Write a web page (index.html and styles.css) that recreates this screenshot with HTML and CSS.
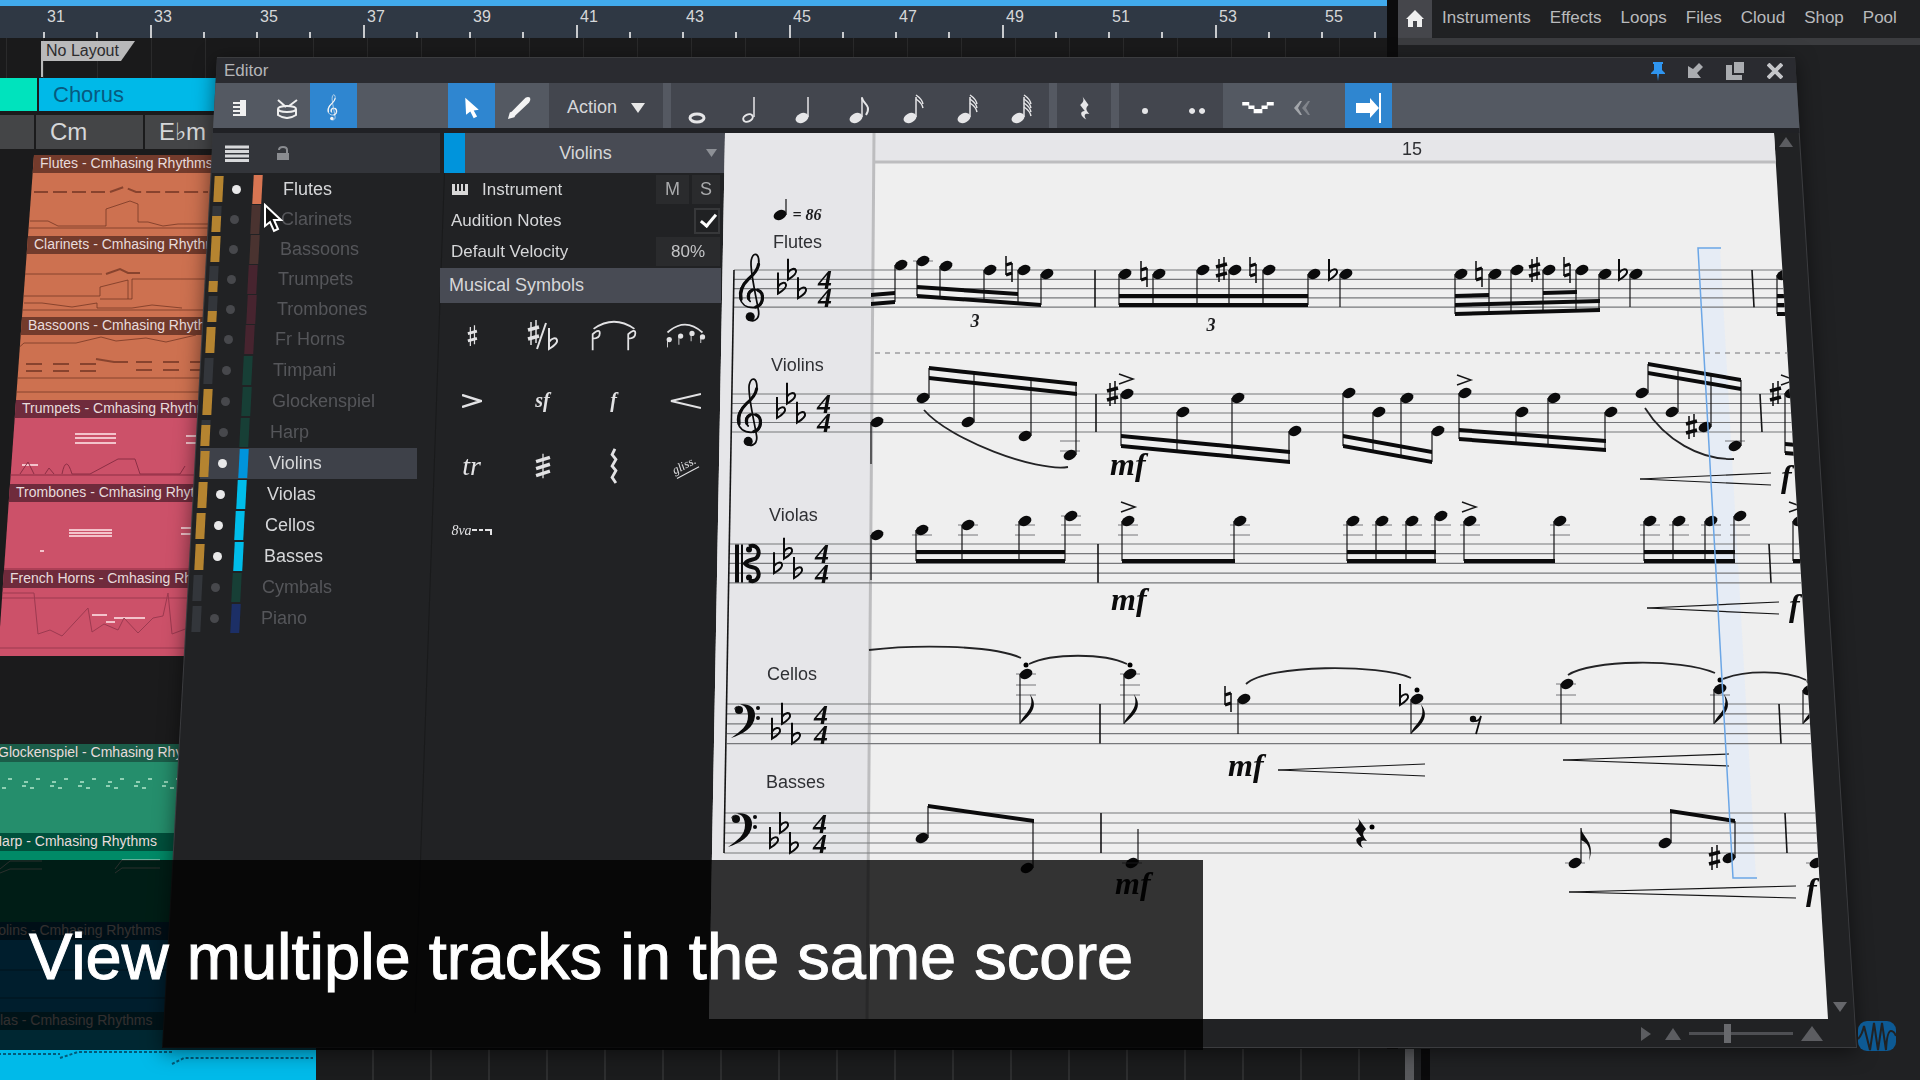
FILE: index.html
```html
<!DOCTYPE html>
<html lang="en">
<head>
    <meta charset="UTF-8">
    <meta name="viewport" content="width=device-width, initial-scale=1.0">
    <title>Score Editor</title>
    <link rel="stylesheet" href="styles.css">
</head>
<body>
    <!-- shared music symbols -->
    <svg class="defs" width="0" height="0" aria-hidden="true">
        <defs>
            <g id="treble">
                <g fill="none" stroke="currentColor" stroke-linecap="round">
                    <path stroke-width="5" d="M-8 10 C-22 -2 -14 -25 6 -24 C36 -21 38 28 0 28 C-42 28 -52 -20 -15 -52 C12 -76 20 -92 16 -112 C13 -128 0 -130 -5 -108 C-10 -84 5 -24 16 38 C20 66 -4 70 -14 60"/>
                    <path stroke-width="9" d="M14 -22 C34 -14 30 20 8 26 M-34 4 C-38 -18 -30 -38 -13 -54 C4 -68 14 -82 16 -96 M-12 2 C-15 -10 -10 -18 -2 -22"/>
                </g>
                <circle cx="-8" cy="54" r="13" fill="currentColor"/>
            </g>
            <g id="bass" fill="currentColor">
                <circle cx="7" cy="-4" r="4"/>
                <path d="M2 -4 C3 -12 24 -13 23 2 C22 14 11 20 -1 24 C9 17 16 12 16 2 C16 -8 9 -11 5 -8z"/>
                <circle cx="26" cy="-6" r="2"/><circle cx="26" cy="4" r="2"/>
            </g>
            <g id="alto" fill="currentColor">
                <path d="M0 -19h4v38h-4z M6 -19h2v38h-2z"/>
                <circle cx="14" cy="-14" r="3"/><circle cx="14" cy="14" r="3"/>
                <path fill="none" stroke="currentColor" stroke-width="4" d="M14 -17 C22 -20 26 -12 22 -6 C20 -3 14 -5 10 0 C14 5 20 3 22 6 C26 12 22 20 14 17"/>
            </g>
            <g id="flat" fill="none" stroke="currentColor" stroke-width="2">
                <path d="M0 -16V5C5 2 9 -1 8 -4C7 -7 3 -6 0 -2"/>
            </g>
            <g id="natural" fill="none" stroke="currentColor">
                <path stroke-width="1.5" d="M-3 -13V6 M3 -6V13"/><path stroke-width="3" d="M-3 -4L3 -6 M-3 6L3 4"/>
            </g>
            <g id="sharp" fill="none" stroke="currentColor">
                <path stroke-width="1.5" d="M-2 -11V12 M3 -13V10"/><path stroke-width="3.5" d="M-5 -3L6 -6 M-5 6L6 3"/>
            </g>
            <g id="head"><ellipse rx="6.7" ry="4.8" transform="rotate(-25)" fill="currentColor"/></g>
            <g id="rest4"><path fill="currentColor" d="M-2 -15L6 -4C2 0 2 2 7 8C1 6 -1 9 3 15C-5 11 -6 4 1 4L-5 -4C0 -8 0 -11 -2 -15z"/></g>
            <g id="rest8"><circle cx="-3" cy="-5" r="3.2" fill="currentColor"/><path fill="none" stroke="currentColor" stroke-width="1.8" d="M-3 -3Q3 -2 5 -8L0 10"/></g>
            <g id="flagUp"><path fill="currentColor" d="M0 0C1 9 15 14 8 33C11 19 5 14 0 12z"/></g>
            <g id="flagDown"><path fill="currentColor" d="M0 0C1 -9 18 -16 11 -33C21 -20 13 -11 0 0z"/></g>
        </defs>
    </svg>

    <main class="daw">
        <section class="arrange">
            <ol class="ruler" id="ruler"></ol>
            <div class="markers"><span class="flag">No Layout</span></div>
            <div class="sections"><span class="part verse"></span><span class="part chorus">Chorus</span></div>
            <div class="chords"><span class="first"></span><span class="chord">Cm</span><span class="chord">E♭m</span></div>
            <ul class="clips" id="clips"></ul>
        </section>
        <aside class="browser">
            <nav class="tabs">
                <a href="#home" class="home" aria-label="Home">
                    <svg width="18" height="18" viewBox="0 0 18 18"><path fill="#eee" d="M9 0L18 9H16V17H11V11H7V17H2V9H0z"/></svg>
                </a>
                <a href="#instruments">Instruments</a>
                <a href="#effects">Effects</a>
                <a href="#loops">Loops</a>
                <a href="#files">Files</a>
                <a href="#cloud">Cloud</a>
                <a href="#shop">Shop</a>
                <a href="#pool">Pool</a>
            </nav>
        </aside>
    </main>
    <div class="foot"></div>

    <div class="window">
        <section class="editor">
            <header class="titlebar">
                <h1>Editor</h1>
                <div class="winbuttons">
                    <button aria-label="Pin"><svg width="14" height="20" viewBox="0 0 14 20"><path fill="#2f95ef" d="M2 1h10v2h-1v6l3 3v1H8l-1 7-1-7H0v-1l3-3V3H2z"/></svg></button>
                    <button aria-label="Dock"><svg width="16" height="16" viewBox="0 0 16 16"><path fill="#aaacb0" d="M12 0L16 4 10 10 14 15H1V3L6 6z"/></svg></button>
                    <button aria-label="Maximize"><svg width="20" height="20" viewBox="0 0 20 20"><path fill="#aaacb0" d="M9 1h10v11H9z M1 4h6v10h10v5H1z"/></svg></button>
                    <button aria-label="Close"><svg width="16" height="16" viewBox="0 0 16 16"><path stroke="#c4c5c8" stroke-width="4" d="M1 1L15 15M15 1L1 15"/></svg></button>
                </div>
            </header>

            <div class="toolbar">
                <button class="tool" aria-label="Piano view"><svg width="14" height="16" viewBox="0 0 14 16"><path fill="#f0f0f0" d="M7 0h6v16H0v-2h7v-2H0v-2h7V8H0V6h7V4H0V2h7z"/></svg></button>
                <button class="tool" aria-label="Drum view"><svg width="24" height="22" viewBox="0 0 24 22" fill="none" stroke="#eee" stroke-width="2"><ellipse cx="12" cy="12" rx="9" ry="3"/><path d="M3 12V18Q12 24 21 18V12M3 3L11 10M22 3L14 9"/></svg></button>
                <button class="tool on" aria-label="Score view"><svg width="18" height="28" viewBox="-32 -70 100 210"><use href="#treble" transform="translate(10 60)" color="#f4f4f4"/></svg></button>
                <button class="tool arrow on" aria-label="Arrow tool"><svg width="18" height="22" viewBox="0 0 20 26"><path fill="#fff" d="M2 1L18 15L12 16L16 23L12 25L8 17L3 21z"/></svg></button>
                <button class="tool" aria-label="Paint tool"><svg width="26" height="24" viewBox="0 0 26 26"><path fill="#f4f4f4" d="M1 25L3 18L5 17L20 2Q23 0 25 2Q26 4 24 7L9 21L8 23z"/></svg></button>
                <button class="action">Action <svg width="14" height="10" viewBox="0 0 14 10"><path fill="#e8e8e8" d="M0 0H14L7 10z"/></svg></button>
                <i class="sep"></i>
                <div class="notes" id="noteTools"></div>
                <i class="sep"></i>
                <div class="notes"><button aria-label="Rest"><svg width="16" height="26" viewBox="-10 -17 20 34"><use href="#rest4"/></svg></button></div>
                <i class="sep"></i>
                <div class="notes">
                    <button aria-label="Dotted"><svg width="16" height="34" viewBox="0 0 16 34"><circle cx="8" cy="20" r="3" fill="currentColor"/></svg></button>
                    <button aria-label="Double dotted"><svg width="18" height="34" viewBox="0 0 18 34"><path fill="currentColor" d="M4 17a3 3 0 1 0 .1 0M14 17a3 3 0 1 0 .1 0"/></svg></button>
                </div>
                <button class="tuplet" aria-label="Tuplet"><svg width="38" height="14" viewBox="0 0 38 16"><path fill="#fff" d="M1 1h8v4H1z M8 5h7v4H8z M14 9h10v5H14z M23 5h7v4h-7z M29 1h8v4h-8z"/></svg></button>
                <button class="back" aria-label="Back"><svg width="18" height="14" viewBox="0 0 18 14"><path fill="#a3a6ab" d="M7 0L1 7L7 14H9L5 7L9 0z"/><path fill="#80848b" d="M15 0L9 7L15 14H17L13 7L17 0z"/></svg></button>
                <button class="tool scroll on" aria-label="Autoscroll"><svg width="28" height="32" viewBox="0 0 28 32"><path fill="#fff" d="M1 11h14V6l9 10-9 10V21H1z M24 1h2v30h-2z"/></svg></button>
            </div>

            <div class="work">
                <div class="tracks">
                    <div class="trackhead">
                        <svg width="24" height="17" viewBox="0 0 24 17"><path stroke="#d8d9db" stroke-width="3" d="M0 2H24M0 6.500H24M0 11H24M0 15.500H24"/></svg>
                        <svg width="12" height="14" viewBox="0 0 12 14"><path fill="#8a8c90" d="M0 7h12v7H0z"/><path fill="none" stroke="#8a8c90" stroke-width="2" d="M10 8V4Q10 1 6 1T2 4"/></svg>
                    </div>
                    <ul class="tracklist" id="tracks"></ul>
                </div>

                <div class="panel">
                    <button class="current"><span>Violins</span><svg width="11" height="8" viewBox="0 0 11 8"><path fill="#8d9096" d="M0 0H11L5.500 8z"/></svg></button>
                    <div class="row instrument">
                        <svg width="16" height="11" viewBox="0 0 16 11"><path fill="#d8d8d8" d="M0 0H3V7H5V0H7V7H9V0H11V7H13V0H16V11H0z"/></svg>
                        <span>Instrument</span>
                        <button class="ms">M</button><button class="ms">S</button>
                    </div>
                    <div class="row">
                        <label for="audition">Audition Notes</label>
                        <input type="checkbox" id="audition" checked>
                    </div>
                    <div class="row">
                        <label for="velocity">Default Velocity</label>
                        <input type="text" id="velocity" value="80%">
                    </div>
                    <h2>Musical Symbols</h2>
                    <div class="symbols">
                        <button aria-label="Sharp"><svg width="22" height="28" viewBox="-13 -17 26 34"><use href="#sharp"/></svg></button>
                        <button aria-label="Sharp or flat"><svg width="36" height="32" viewBox="0 0 36 32"><use href="#sharp" transform="translate(8 13)"/><path stroke="currentColor" stroke-width="2" d="M12 29L21 3"/><use href="#flat" transform="translate(24 24)"/></svg></button>
                        <button aria-label="Tie"><svg width="56" height="32" viewBox="0 0 56 36"><g fill="none" stroke="currentColor" stroke-width="2"><path d="M5 10Q28 -6 51 10"/><path d="M4 34V16Q12 9 12 15T4 21M44 34V16Q52 9 52 15T44 21"/></g></svg></button>
                        <button aria-label="Slur"><svg width="48" height="28" viewBox="0 0 48 32"><path fill="none" stroke="currentColor" stroke-width="2" d="M4 12Q24 -6 44 12"/><path stroke="currentColor" d="M4 29V20M17 26V16M31 22V13M42 24V17"/><g fill="currentColor"><circle cx="6" cy="20" r="3"/><circle cx="19" cy="16" r="3"/><circle cx="32" cy="13" r="3"/><circle cx="44" cy="17" r="3"/></g></svg></button>
                        <button aria-label="Accent"><svg width="20" height="14" viewBox="0 0 20 14"><path fill="none" stroke="currentColor" stroke-width="2.500" d="M0 1L19 7L0 13"/></svg></button>
                        <button>sf</button>
                        <button>f</button>
                        <button aria-label="Crescendo"><svg width="32" height="18" viewBox="0 0 32 18"><path fill="none" stroke="currentColor" stroke-width="2" d="M32 2L2 9L32 16"/></svg></button>
                        <button class="big">tr</button>
                        <button aria-label="Tremolo"><svg width="18" height="26" viewBox="0 0 20 30"><path stroke="currentColor" stroke-width="1.500" d="M10 1V29"/><path stroke="currentColor" stroke-width="4" d="M2 10L18 5M2 18L18 13M2 26L18 21"/></svg></button>
                        <button aria-label="Arpeggio"><svg width="12" height="36" viewBox="0 0 12 38"><path fill="none" stroke="currentColor" stroke-width="3" d="M7 1L4 7L8 12L4 19L8 24L4 31L8 37"/></svg></button>
                        <button class="gliss"><span>gliss.</span></button>
                        <button class="ottava">8va<svg width="20" height="10" viewBox="0 0 20 10"><path fill="none" stroke="currentColor" stroke-width="2" d="M0 4H5M7 4H11M13 4H19V9"/></svg></button>
                    </div>
                </div>

                <svg class="score" id="score" viewBox="709 133 1148 887" role="img" aria-label="Score"></svg>

                <div class="vscroll">
                    <button aria-label="Scroll up"><svg width="14" height="10" viewBox="0 0 14 10"><path fill="#5c5d61" d="M0 10H14L7 0z"/></svg></button>
                    <button aria-label="Scroll down"><svg width="14" height="10" viewBox="0 0 14 10"><path fill="#66676b" d="M0 0H14L7 10z"/></svg></button>
                </div>
            </div>

            <footer class="zoombar">
                <button aria-label="Scroll right"><svg width="10" height="14" viewBox="0 0 10 14"><path fill="#5c5d61" d="M0 0V14L10 7z"/></svg></button>
                <svg width="16" height="12" viewBox="0 0 16 12"><path fill="#5c5d61" d="M0 12H16L8 0z"/></svg>
                <input type="range" min="0" max="100" value="36" aria-label="Zoom">
                <svg width="22" height="15" viewBox="0 0 22 15"><path fill="#5c5d61" d="M0 15H22L11 0z"/></svg>
            </footer>
        </section>
    </div>

    <svg class="pointer" width="20" height="30" viewBox="0 0 20 30"><path fill="#111" stroke="#fff" stroke-width="2" d="M2 2V23L7 19L11 28L15 26L11 17H18z"/></svg>

    <p class="caption">View multiple tracks in the same score</p>

    <svg class="logo" width="38" height="30" viewBox="0 0 38 30">
        <rect width="38" height="30" rx="9" fill="#0d5a94"/>
        <path fill="none" stroke="#202224" stroke-width="2" d="M0 18Q4 14 6 5L12 29L16 2L20 29L24 2L28 29Q29 10 33 10Q36 10 38 15"/>
    </svg>

    <script src="script.js"></script>
</body>
</html>
```
FILE: styles.css
```css
* {
    box-sizing: border-box;
}
body {
    margin: 0;
    min-height: 100vh;
    position: relative;
    overflow: hidden;
    background: #202123;
    color: #d6d7d9;
    font-family: "Liberation Sans", Arial, sans-serif;
    font-size: 17px;
}
ul, ol {
    list-style: none;
    margin: 0;
    padding: 0;
}
button {
    margin: 0;
    padding: 0;
    border: none;
    background: none;
    color: inherit;
    font: inherit;
    cursor: pointer;
}
svg {
    display: block;
    flex: none;
}
.defs {
    position: absolute;
}

/* arrangement behind the editor */
.daw {
    display: flex;
    min-height: 100vh;
}
.arrange {
    flex: 1;
    min-width: 0;
    overflow: hidden;
    background: #1b1b1c;
}
.ruler {
    display: flex;
    height: 38px;
    padding-left: 43px;
    overflow: hidden;
    border-top: 6px solid #41aaec;
    background: #2f3844;
    font-size: 16px;
    line-height: 22px;
}
.ruler li {
    flex: 0 0 107px;
    height: 32px;
    padding-left: 4px;
    background: linear-gradient(#c8cacd, #c8cacd) 0 100% / 2px 6px no-repeat,
                linear-gradient(#c8cacd, #c8cacd) 53px 100% / 2px 6px no-repeat;
}
.ruler li:nth-child(even) {
    flex-basis: 106px;
    background-size: 2px 13px, 2px 6px;
}
.markers {
    height: 40px;
    padding: 3px 0 0 41px;
    background: repeating-linear-gradient(90deg, #2a2a2b 0 1px, transparent 1px 54px) 43px 0 #1a1a1b;
}
.flag {
    display: block;
    position: relative;
    width: 94px;
    height: 20px;
    padding-left: 5px;
    background: #b9b9ba;
    clip-path: polygon(0 0, 100% 0, 80px 100%, 0 100%);
    color: #2c2c2e;
    font-size: 16px;
    line-height: 19px;
}
.markers::after {
    content: "";
    display: block;
    width: 2px;
    height: 16px;
    background: #b9b9ba;
}
.sections, .chords {
    display: flex;
    gap: 2px;
}
.sections {
    height: 33px;
}
.part {
    flex: 1;
    padding-left: 14px;
    color: #075a80;
    font-size: 22px;
    line-height: 34px;
}
.verse {
    flex: 0 0 37px;
    background: #00e3bd;
}
.chorus {
    background: #00b9e8;
}
.chords {
    height: 34px;
    margin-top: 4px;
    font-size: 24px;
    line-height: 34px;
}
.chords span {
    flex: 0 0 107px;
    padding-left: 14px;
    background: #444547;
}
.chords .first {
    flex-basis: 34px;
}
.clips {
    width: 316px;
    margin-top: 6px;
    font-size: 14px;
}
.clip {
    overflow: hidden;
    clip-path: polygon(6px 0, 100% 0, 100% 100%, 0 100%);
}
.clip b {
    display: block;
    height: 18px;
    padding-left: 12px;
    font-weight: normal;
    line-height: 17px;
    white-space: nowrap;
    color: #e8dcdc;
}
.clip svg {
    width: 100%;
}
.orange { background: #cd7150; }
.orange b { background: #733b2c; }
.pink { background: #cc5169; }
.pink b { background: #6f2b3c; }
.green { background: #258e6c; }
.green b { background: #1b5d49; }
.harp { background: #008a67; }
.harp b { background: #00503c; }
.blue { background: #0090d6; }
.blue b { background: #00466c; }
.cyan { background: #00bae9; }
.cyan b { background: #005a74; }

.browser {
    flex: 0 0 533px;
    border-left: 11px solid #0c0c0d;
}
.tabs {
    display: flex;
    align-items: center;
    gap: 19px;
    height: 45px;
    padding-bottom: 2px;
    border-bottom: 7px solid #3b3c3f;
}
.tabs a {
    color: #b9babc;
    text-decoration: none;
}
.tabs .home {
    display: flex;
    align-items: center;
    justify-content: center;
    align-self: stretch;
    width: 34px;
    margin: 0 -9px -2px 0;
    background: #45464b;
}

/* strip of empty tracks that shows below the editor */
.foot {
    position: absolute;
    bottom: 0;
    left: 316px;
    right: 485px;
    height: 31px;
    background: linear-gradient(90deg, #58595c 9px, #1f2022 9px 16px, #0a0a0b 16px 25px, #202123 25px) 100% 0 / 30px 100% no-repeat,
                repeating-linear-gradient(90deg, transparent 0 56px, #2d2e2f 56px 58px) #1b1c1d;
}

/* editor window, seen slightly in perspective */
.window {
    position: absolute;
    top: 57px;
    left: 162px;
    right: 63px;
    filter: drop-shadow(0 4px 10px rgba(0, 0, 0, 0.500));
}
.editor {
    position: relative;
    background: #3b3c3f;
    clip-path: polygon(55px 0, calc(100% - 62px) 0, 100% 100%, 0 100%);
}
.editor::before {
    content: "";
    position: absolute;
    inset: 1px;
    background: #212224;
    clip-path: polygon(55px 0, calc(100% - 62px) 0, 100% 100%, 0 100%);
}
.editor > * {
    position: relative;
}
.titlebar {
    display: flex;
    align-items: center;
    justify-content: space-between;
    height: 26px;
    padding: 0 74px 0 62px;
    border-top: 1px solid #3b3c3f;
    background: #2a2b30;
}
.titlebar h1 {
    margin: 0;
    font-size: 17px;
    font-weight: normal;
    line-height: 22px;
    color: #b4b5b8;
}
.winbuttons {
    display: flex;
    align-items: center;
    gap: 22px;
}
.toolbar {
    display: flex;
    height: 50px;
    padding-left: 54px;
    border-bottom: 5px solid #202125;
    background: #545962;
}
.toolbar button {
    padding-top: 4px;
}
.tool {
    display: flex;
    align-items: center;
    justify-content: center;
    width: 47px;
}
.tool.on {
    background: #2f86d0;
}
.tool.arrow {
    margin-left: 91px;
}
.action {
    display: flex;
    align-items: center;
    justify-content: center;
    gap: 14px;
    width: 114px;
    margin-left: 7px;
    background: #43464e;
    font-size: 18px;
}
.sep {
    width: 8px;
    background: #555962;
}
.notes {
    display: flex;
    background: #43464e;
    color: #e6e6e8;
}
.notes button {
    display: flex;
    align-items: center;
    justify-content: center;
    width: 54px;
}
.notes:last-of-type button {
    width: 52px;
}
.tuplet {
    display: flex;
    align-items: center;
    justify-content: center;
    width: 70px;
}
.back {
    width: 26px;
}
.tool.scroll {
    margin-left: 26px;
}
.work {
    display: flex;
    align-items: flex-start;
}
.tracks {
    flex: 0 0 278px;
}
.trackhead {
    display: flex;
    align-items: center;
    gap: 28px;
    height: 40px;
    margin-left: 50px;
    padding-left: 13px;
    background: #33353a;
}
.tracklist {
    padding: 1px 0 0 24px;
    font-size: 18px;
}
.track {
    display: flex;
    align-items: center;
    width: 217px;
    height: 30px;
    color: #55565a;
}
.track:nth-child(n + 6) {
    height: 31px;
}
.track.active {
    color: #d6d7d9;
}
.track.selected {
    background: #3e4149;
}
.track i {
    width: 9px;
    height: 26px;
    transform: skewX(-3deg);
}
.meter {
    background: #33363b;
}
.meter.full { background: #b58430; }
.meter.half { background: linear-gradient(#33363b 40%, #b58430 40%); }
.meter.low { background: linear-gradient(#33363b 58%, #b58430 58%); }
.meter.most { background: linear-gradient(#33363b 20%, #b58430 20%); }
.dot {
    width: 9px;
    height: 9px;
    margin: 0 12px 0 9px;
    border-radius: 50%;
    background: #47484c;
}
.active .dot {
    background: #e8e8e9;
}
.track .colour {
    height: 29px;
    margin-right: 21px;
}
.salmon { background: #d87552; }
.brown { background: #4a3330; }
.wine { background: #47242f; }
.moss { background: #173f36; }
.navy { background: #1c2f66; }
.sky { background: #0094dc; }
.aqua { background: #00bdea; }

.panel {
    flex: 0 0 285px;
    position: relative;
}
.panel::before {
    content: "";
    position: absolute;
    top: 0;
    left: -10px;
    width: 1px;
    height: 880px;
    background: #191a1b;
    transform: skewX(-2deg);
}
.current {
    display: flex;
    align-items: center;
    position: relative;
    width: 281px;
    height: 40px;
    margin: 0 0 1px 4px;
    padding-right: 8px;
    border-left: 21px solid #0094dc;
    background: #484b54;
    font-size: 18px;
}
.current span {
    flex: 1;
}
.row {
    display: flex;
    align-items: center;
    position: relative;
    height: 31px;
    padding: 0 5px 0 11px;
}
.row label {
    flex: 1;
}
.instrument svg {
    margin: 0 14px 0 1px;
}
.instrument span {
    flex: 1;
}
.ms {
    width: 33px;
    height: 29px;
    background: #2a2b2d;
    color: #a9aaac;
    font-size: 18px;
}
.ms + .ms {
    width: 28px;
    margin-left: 3px;
}
.row input[type="checkbox"] {
    appearance: none;
    width: 26px;
    height: 26px;
    margin: 0;
    border: 2px solid #37383a;
    background: #202123;
}
.row input[type="checkbox"]:checked::after {
    content: "";
    display: block;
    width: 6px;
    height: 13px;
    margin: 1px 0 0 8px;
    border: solid #fff;
    border-width: 0 3px 3px 0;
    transform: rotate(40deg);
}
.row input[type="text"] {
    width: 64px;
    height: 29px;
    border: none;
    background: #2a2b2d;
    color: #c4c5c7;
    font: inherit;
    text-align: center;
}
.panel h2 {
    position: relative;
    height: 35px;
    margin: 1px 4px 0 0;
    padding-left: 9px;
    background: #484b54;
    font-size: 18px;
    font-weight: normal;
    line-height: 34px;
}
.symbols {
    display: grid;
    grid-template-columns: repeat(4, 71px);
    grid-auto-rows: 65px;
    margin-left: -4px;
    color: #e2e2e4;
    font: italic bold 20px "Liberation Serif", "Times New Roman", serif;
}
.symbols button {
    display: flex;
    align-items: center;
    justify-content: center;
}
.symbols .big {
    font-size: 28px;
    font-weight: normal;
}
.gliss span {
    border-bottom: 1px solid;
    font-size: 12px;
    font-weight: normal;
    transform: rotate(-28deg);
}
.symbols .ottava {
    font-size: 14px;
    font-weight: normal;
}
.score {
    flex: 1 1 0;
    min-width: 0;
    margin-left: -16px;
    position: relative;
}
.score text {
    font-size: 18px;
    fill: #2f3034;
}
.score .dyn {
    font: italic bold 32px "Liberation Serif", "Times New Roman", serif;
    fill: #0b0b0c;
}
.score .time {
    font: italic bold 28px "Liberation Serif", "Times New Roman", serif;
    fill: #0b0b0c;
    text-anchor: middle;
}
.score .mark {
    font: italic bold 18px "Liberation Serif", "Times New Roman", serif;
    fill: #1c1c1e;
    text-anchor: middle;
}
.vscroll {
    display: flex;
    flex: 0 0 78px;
    flex-direction: column;
    align-self: stretch;
    justify-content: space-between;
    position: relative;
    margin: 4px 5px 8px -83px;
}
.vscroll button {
    padding: 0 5px;
    align-self: flex-start;
}
.vscroll button:last-child {
    align-self: flex-end;
}
.zoombar {
    display: flex;
    align-items: center;
    justify-content: flex-end;
    gap: 8px;
    height: 28px;
    padding-right: 34px;
    border-bottom: 1px solid #3b3c3f;
}
.zoombar button {
    margin-right: 6px;
}
.zoombar input {
    appearance: none;
    width: 104px;
    height: 20px;
    margin: 0;
    background: linear-gradient(#4e4f53, #4e4f53) 0 50% / 100% 3px no-repeat;
}
.zoombar input::-webkit-slider-thumb {
    appearance: none;
    width: 7px;
    height: 19px;
    background: #68696d;
}

/* things lying over the windows */
.pointer {
    position: absolute;
    top: 203px;
    left: 263px;
}
.caption {
    position: absolute;
    top: 860px;
    left: 0;
    width: 1203px;
    height: 190px;
    margin: 0;
    padding-left: 29px;
    background: rgba(0, 0, 0, 0.790);
    color: #fff;
    font-size: 65px;
    line-height: 194px;
    white-space: nowrap;
    -webkit-text-stroke: 1px #fff;
}
.logo {
    position: absolute;
    right: 24px;
    top: 1021px;
}
```
FILE: script.js
```js
// ---- ruler ----
const ruler = document.getElementById("ruler");
for (let bar = 31; bar <= 55; bar += 2) {
    ruler.innerHTML += `<li>${bar}</li>`;
}

// ---- clips in the arrangement: name, colour, height, drawing ----
const dark = 'fill="none" stroke="#6b3020" stroke-opacity=".7"';
const light = 'fill="none" stroke="#f3c3cb" stroke-width="2"';
const clips = [
    ["Flutes", "orange", 81, `<path ${dark} stroke-width="2" stroke-dasharray="14 5" d="M6 19H82L96 14L108 19H180"/><path ${dark} d="M2 48H20L30 53H78V36L102 28L110 31V49H120L135 53L150 51H300M0 55H300"/>`],
    ["Clarinets", "orange", 81, `<path ${dark} d="M2 20H80"/><path ${dark} stroke-width="2" d="M84 20L98 15L106 19H118"/><path ${dark} d="M2 42H78V33L106 26V45M78 45H110V25H300M2 49H20L50 53L75 49V54H110L130 51L160 54M0 56H300"/>`],
    ["Bassoons", "orange", 83, `<path ${dark} d="M0 15L8 8H60L85 2L100 6L130 3L150 7L180 0"/><path ${dark} stroke-width="2" stroke-dasharray="16 11" d="M10 29H80M120 27H200M10 36H80M120 35H200"/><path ${dark} stroke-width="2" d="M80 24L98 27H112"/><path ${dark} d="M0 43H300M0 57H300"/>`],
    ["Trumpets", "pink", 84, `<path ${light} d="M65 16H106M65 20H106M65 25H106M12 47H28M176 18H190M176 25H190"/><path fill="none" stroke="#8c2f45" d="M10 56L18 44L24 56M35 56L39 50L44 56M52 56Q56 36 62 56H80L108 41H125L130 56H170L175 48M0 57H300"/>`],
    ["Trombones", "pink", 86, `<path ${light} d="M65 28H108M65 31H108M65 34H108M177 26H190M177 32H190M36 49H40"/><path fill="none" stroke="#8c2f45" d="M0 67H300"/>`],
    ["French Horns", "pink", 86, `<path ${light} d="M94 27H109M116 30H147M108 34H117"/><path fill="none" stroke="#9c3a50" d="M0 5H36L40 46L52 42L64 48L90 20L94 44L106 36L120 42L126 30L140 45L155 30L165 28L170 5L174 46L190 40M0 10H300M0 60H300"/>`],
    null,
    ["Glockenspiel", "green", 89, `<path fill="none" stroke="#8fd0b4" stroke-width="2" stroke-dasharray="4 24" d="M10 20H200M22 17H200M36 24H200M16 26H200"/>`],
    ["Harp", "harp", 89, `<path fill="none" stroke="#c8d8d0" d="M20 18L30 10H62M20 22L30 18H62M135 18L142 9H180M135 22L142 17H180"/>`],
    ["Violins", "blue", 90, `<path fill="none" stroke="#00507c" d="M0 30H300M0 58H300"/>`],
    ["Violas", "cyan", 68, `<path fill="none" stroke="#045a78" stroke-width="2" stroke-dasharray="3 2" d="M30 24H92M92 28L110 22H204M204 34L216 28H345"/>`]
];

document.getElementById("clips").innerHTML = clips.map((clip, i) => {
    if (!clip) return '<li style="height:88px"></li>';
    const [name, colour, height, art] = clip;
    const left = 28 - 6 * i;
    return `<li class="clip ${colour}" style="height:${height}px;margin-left:${left}px">
        <b>${name} - Cmhasing Rhythms</b><svg height="${height - 18}">${art}</svg></li>`;
}).join("");

// ---- track list: name, active, level, colour ----
const tracks = [
    ["Flutes", 1, "full", "salmon"],
    ["Clarinets", 0, "half", "brown"],
    ["Bassoons", 0, "full", "brown"],
    ["Trumpets", 0, "low", "wine"],
    ["Trombones", 0, "low", "wine"],
    ["Fr Horns", 0, "full", "wine"],
    ["Timpani", 0, "", "moss"],
    ["Glockenspiel", 0, "full", "moss"],
    ["Harp", 0, "most", "moss"],
    ["Violins", 1, "full", "sky"],
    ["Violas", 1, "full", "aqua"],
    ["Cellos", 1, "full", "aqua"],
    ["Basses", 1, "full", "aqua"],
    ["Cymbals", 0, "", "moss"],
    ["Piano", 0, "", "navy"]
];

document.getElementById("tracks").innerHTML = tracks.map(([name, active, level, colour], i) => {
    const left = 28 - Math.round(i * 1.6);
    const state = (active ? " active" : "") + (name === "Violins" ? " selected" : "");
    return `<li class="track${state}" style="margin-left:${left}px"><i class="meter ${level}"></i>
        <span class="dot"></span><i class="colour ${colour}"></i><span>${name}</span></li>`;
}).join("");

// ---- note length buttons ----
const lengths = ["Whole", "Half", "Quarter", "Eighth", "16th", "32nd", "64th"];
document.getElementById("noteTools").innerHTML = lengths.map((name, i) => {
    let art;
    if (i === 0) {
        art = '<ellipse cx="11" cy="28" rx="7" ry="4" fill="none" stroke="currentColor" stroke-width="3"/>';
    } else {
        art = i === 1
            ? '<ellipse cx="8" cy="28" rx="5" ry="3.500" transform="rotate(-25 8 28)" fill="none" stroke="currentColor" stroke-width="2"/>'
            : '<use href="#head" x="8" y="28"/>';
        art += '<path stroke="currentColor" stroke-width="1.500" d="M14 27V7"/>';
        if (i === 3) art += '<path fill="none" stroke="currentColor" stroke-width="2" d="M14 8C15 14 24 15 18 25"/>';
        for (let f = 0; i > 3 && f < i - 2; f++) {
            art += `<path fill="none" stroke="currentColor" stroke-width="1.500" d="M14 ${5 + f * 4}Q20 ${9 + f * 4} 21 ${14 + f * 4}"/>`;
        }
    }
    return `<button aria-label="${name}"><svg width="24" height="36" viewBox="0 0 24 36">${art}</svg></button>`;
}).join("");

// ---- score ----
let out = "";
const line = (x1, y1, x2, y2, w = 1.2, c = "#151516") => {
    out += `<line x1="${x1}" y1="${y1}" x2="${x2}" y2="${y2}" stroke="${c}" stroke-width="${w}"/>`;
};
const use = (id, x, y, s = 1) => {
    out += `<use href="#${id}" transform="translate(${x} ${y}) scale(${s})"/>`;
};
const text = (cls, x, y, t) => {
    out += `<text class="${cls}" x="${x}" y="${y}">${t}</text>`;
};
const curve = d => {
    out += `<path d="${d}" fill="none" stroke="#232325" stroke-width="1.800"/>`;
};
const beam = (x1, y1, x2, y2) => {
    out += `<path d="M${x1} ${y1 - 2}L${x2} ${y2 - 2}V${y2 + 2}L${x1} ${y1 + 2}z" fill="#0b0b0c"/>`;
};
const accent = (x, y) => {
    out += `<path d="M${x - 7} ${y - 5}L${x + 7} ${y}L${x - 7} ${y + 5}" fill="none" stroke="#151516" stroke-width="1.500"/>`;
};
const hairpin = (x1, y, x2) => {
    line(x1, y, x2, y - 6);
    line(x1, y, x2, y + 6);
};
const ledger = (x, ...ys) => ys.forEach(y => line(x - 10, y, x + 10, y, 1, "#77777a"));

// heads joined by beams; side -1 puts stems down on the left, 1 up on the right
function group(heads, side, beams) {
    const [bx1, by1, bx2, by2] = beams[0];
    heads.forEach(([x, y]) => {
        const sx = x + side * 6;
        use("head", x, y);
        line(sx, y, sx, by1 + (by2 - by1) * (sx - bx1) / (bx2 - bx1));
    });
    beams.forEach(b => beam(...b));
}
function single(x, y, end, side = -1) {
    use("head", x, y);
    line(x + side * 6, y, x + side * 6, end);
}

// staves: label, label x, baseline, top line, spacing, clef, left, key x, flats, time x, bars
const staves = [
    ["Flutes", 773, 248, 270, 9.3, "treble", 734, 778, [2, 0.5, 2.5], 825, [1095, 1752]],
    ["Violins", 771, 371, 394, 9.5, "treble", 732, 777, [2, 0.5, 2.5], 824, [1096, 1760]],
    ["Violas", 769, 521, 544, 9.7, "alto", 729, 774, [2.5, 1, 3], 822, [1098, 1769]],
    ["Cellos", 767, 680, 704, 9.9, "bass", 727, 772, [3, 1.5, 3.5], 821, [1100, 1779]],
    ["Basses", 766, 788, 813, 10, "bass", 724, 770, [3, 1.5, 3.5], 820, [1101, 1785]]
];
staves.forEach(([name, lx, ly, top, sp, clef, left, kx, flats, tx, bars]) => {
    for (let i = 0; i < 5; i++) line(left, top + i * sp, 1857, top + i * sp, 1.2, "#77787b");
    text("", lx, ly, name);
    if (clef === "treble") use(clef, left + 19, top + 3 * sp, 0.35);
    if (clef === "bass") use(clef, left + 5, top + sp);
    if (clef === "alto") use(clef, left + 6, top + 2 * sp);
    flats.forEach((f, i) => use("flat", kx + i * 10, top + f * sp));
    text("time", tx, top + 2 * sp, "4");
    text("time", tx, top + 4 * sp, "4");
    bars.forEach(x => line(x, top, x + (x > 1500 ? 2 : 0), top + 4 * sp, 1.6));
});
line(734, 270, 724, 853, 1.6);
single(780, 215, 199, 1);
text("mark", 807, 220, '<tspan font-size="16">= 86</tspan>');
out += '<path d="M875 353H1857" stroke="#9d9da0" stroke-width="1.500" stroke-dasharray="5 5"/>';

// flutes
group([[901, 265]], -1, [[871, 304, 895, 302], [871, 295, 895, 293]]);
ledger(923, 261);
group([[923, 261], [946, 266], [990, 270], [1024, 270], [1047, 274]], -1, [[917, 296, 1041, 305], [917, 287, 1018, 294]]);
use("natural", 1009, 269);
text("mark", 975, 327, "3");
group([[1125, 274], [1159, 274], [1203, 270], [1235, 270], [1269, 270], [1314, 274]], -1, [[1119, 305, 1308, 305], [1119, 296, 1308, 296]]);
use("natural", 1144, 274);
use("sharp", 1221, 270);
use("natural", 1253, 270);
text("mark", 1211, 331, "3");
use("flat", 1329, 275);
single(1346, 274, 307);
group([[1461, 274], [1495, 274], [1517, 270], [1549, 270], [1582, 270], [1605, 274]], -1,
    [[1455, 314, 1600, 310], [1455, 305, 1600, 301], [1455, 296, 1489, 295], [1543, 293, 1577, 292]]);
use("natural", 1479, 274);
use("sharp", 1534, 270);
use("natural", 1567, 270);
use("flat", 1619, 275);
single(1636, 274, 307);
group([[1783, 275]], -1, [[1777, 314, 1800, 314], [1777, 305, 1800, 305], [1777, 296, 1800, 296]]);

// violins
single(877, 422, 464);
ledger(1070, 441, 451);
group([[923, 398], [968, 422], [1025, 436], [1070, 455]], 1, [[929, 368, 1077, 384], [929, 378, 1077, 394]]);
curve("M924 410C950 440 1036 472 1068 467");
use("sharp", 1112, 394);
accent(1126, 379);
group([[1127, 394], [1183, 412], [1238, 398], [1295, 431]], -1, [[1121, 446, 1290, 462], [1121, 436, 1290, 452]]);
text("dyn", 1110, 475, "mf");
group([[1349, 393], [1379, 412], [1407, 398], [1438, 431]], -1, [[1343, 446, 1432, 462], [1343, 436, 1432, 452]]);
accent(1464, 380);
group([[1465, 393], [1522, 412], [1554, 398], [1611, 412]], -1, [[1459, 439, 1606, 450], [1459, 430, 1606, 441]]);
ledger(1735, 441);
group([[1642, 393], [1672, 412], [1705, 427], [1735, 446]], 1, [[1648, 364, 1741, 380], [1648, 373, 1741, 389]]);
use("sharp", 1691, 427);
curve("M1645 408C1665 440 1700 460 1734 459");
hairpin(1640, 479, 1771);
text("dyn", 1781, 487, "f");
use("sharp", 1775, 394);
accent(1788, 380);
group([[1791, 393]], -1, [[1785, 453, 1810, 455], [1785, 444, 1810, 446]]);

// violas
single(877, 535, 580);
ledger(922, 535);
ledger(968, 525, 535);
ledger(1025, 525, 535);
ledger(1071, 516, 525, 535);
group([[922, 530], [968, 525], [1025, 521], [1071, 516]], -1, [[916, 561, 1065, 561], [916, 552, 1065, 552]]);
[1128, 1240, 1353, 1382, 1412, 1441, 1470, 1560, 1650, 1679, 1711, 1740].forEach(x => ledger(x, 525, 535));
accent(1128, 507);
group([[1128, 521], [1240, 521]], -1, [[1122, 561, 1235, 561]]);
text("dyn", 1111, 610, "mf");
group([[1353, 521], [1382, 521], [1412, 521], [1441, 516]], -1, [[1347, 561, 1436, 561], [1347, 552, 1436, 552]]);
accent(1469, 507);
group([[1470, 521], [1560, 521]], -1, [[1464, 561, 1555, 561]]);
group([[1650, 521], [1679, 521], [1711, 521], [1740, 516]], -1, [[1644, 561, 1735, 561], [1644, 552, 1735, 552]]);
hairpin(1647, 608, 1779);
text("dyn", 1789, 616, "f");
accent(1796, 507);
group([[1799, 521]], -1, [[1793, 561, 1820, 561]]);

// cellos
const quaver = (x, y, end) => {
    single(x, y, end);
    use("flagDown", x - 6, end, 0.9);
    out += `<circle cx="${x}" cy="${y - 9}" r="2.500"/>`;
};
ledger(1026, 674, 685, 695);
ledger(1130, 674, 685, 695);
ledger(1566, 684, 695);
ledger(1720, 695);
curve("M869 650C910 645 990 644 1021 658");
quaver(1026, 674, 724);
curve("M1029 664C1052 653 1104 653 1127 664");
quaver(1130, 674, 724);
use("natural", 1228, 699);
single(1244, 699, 734);
curve("M1246 684C1268 664 1380 664 1411 678");
use("flat", 1400, 700);
quaver(1417, 699, 734);
use("rest8", 1476, 724);
text("dyn", 1228, 776, "mf");
hairpin(1278, 770, 1425);
single(1567, 684, 724);
curve("M1568 675C1590 660 1680 658 1715 673");
quaver(1720, 689, 724);
curve("M1723 679C1745 670 1785 670 1806 680");
hairpin(1563, 760, 1729);
quaver(1809, 690, 724);

// basses
group([[922, 838], [1027, 868]], 1, [[928, 806, 1034, 821]]);
single(1132, 863, 829, 1);
ledger(1132, 863);
text("dyn", 1115, 894, "mf");
use("rest4", 1360, 833);
out += '<circle cx="1372" cy="827" r="2.500"/>';
ledger(1575, 863);
single(1575, 863, 828, 1);
use("flagUp", 1581, 828);
group([[1665, 843], [1729, 858]], 1, [[1670, 811, 1735, 821]]);
use("sharp", 1714, 858);
hairpin(1569, 892, 1796);
ledger(1816, 863);
use("head", 1816, 863);
text("dyn", 1806, 900, "f");

document.getElementById("score").innerHTML = `
    <defs><clipPath id="paper"><path d="M725 133H1774L1828 1019H709z"/></clipPath></defs>
    <g clip-path="url(#paper)" color="#0b0b0c">
        <path fill="#efefef" d="M700 133H1857V1020H700z"/>
        <path fill="#e6e6e9" d="M700 133H873L866 1020H700z M873 133H1857V161H873z"/>
        <path fill="none" stroke="#bdbdbf" stroke-width="3" d="M874 133L867 1020M875 162H1857"/>
        <path fill="#e4ebf6" opacity=".8" d="M1698 248H1720L1756 878H1733z"/>
        <text x="1402" y="155">15</text>
        ${out}
        <path fill="none" stroke="#6ba6e6" stroke-width="1.500" d="M1721 248H1698L1733 878H1757"/>
    </g>`;
```
